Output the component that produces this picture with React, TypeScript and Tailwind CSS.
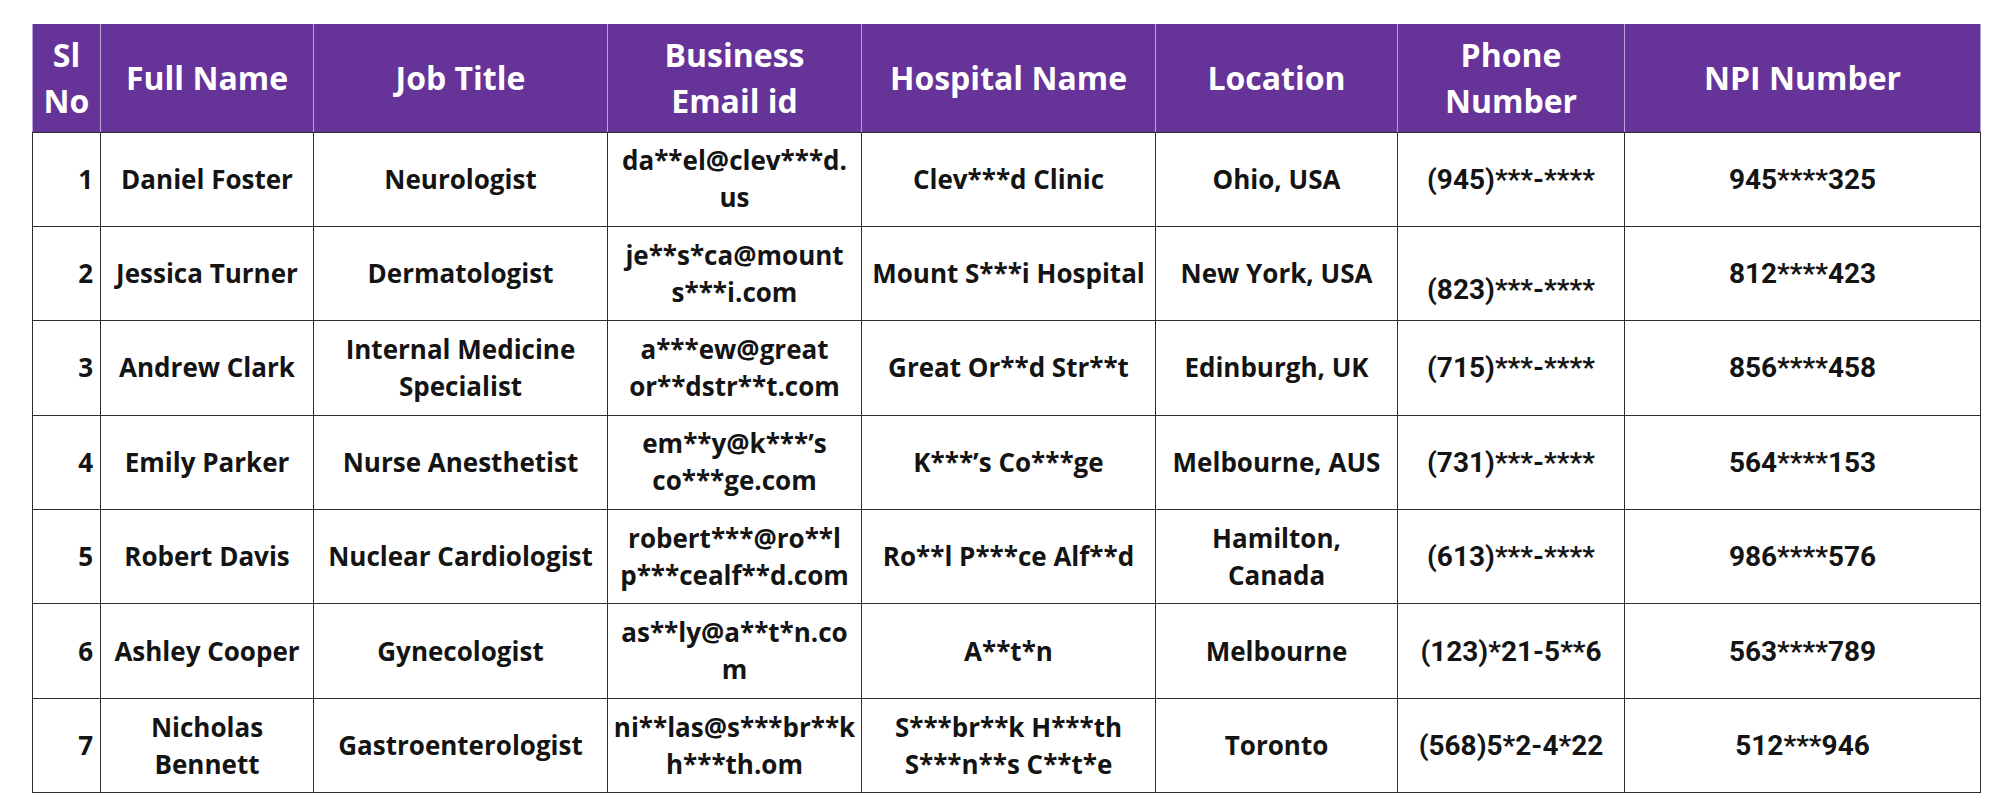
const HEAD = [
  ['Sl', 'No'],
  ['Full Name'],
  ['Job Title'],
  ['Business', 'Email id'],
  ['Hospital Name'],
  ['Location'],
  ['Phone', 'Number'],
  ['NPI Number'],
]

type Row = {
  no: number
  name: string[]
  job: string[]
  email: string[]
  hospital: string[]
  location: string[]
  phone: string
  npi: string
  phoneLow?: boolean
}

const ROWS: Row[] = [
  { no: 1, name: ['Daniel Foster'], job: ['Neurologist'], email: ['da**el@clev***d.', 'us'], hospital: ['Clev***d Clinic'], location: ['Ohio, USA'], phone: '(945)***-****', npi: '945****325' },
  { no: 2, name: ['Jessica Turner'], job: ['Dermatologist'], email: ['je**s*ca@mount', 's***i.com'], hospital: ['Mount S***i Hospital'], location: ['New York, USA'], phone: '(823)***-****', npi: '812****423', phoneLow: true },
  { no: 3, name: ['Andrew Clark'], job: ['Internal Medicine', 'Specialist'], email: ['a***ew@great', 'or**dstr**t.com'], hospital: ['Great Or**d Str**t'], location: ['Edinburgh, UK'], phone: '(715)***-****', npi: '856****458' },
  { no: 4, name: ['Emily Parker'], job: ['Nurse Anesthetist'], email: ['em**y@k***\u2019s', 'co***ge.com'], hospital: ['K***\u2019s Co***ge'], location: ['Melbourne, AUS'], phone: '(731)***-****', npi: '564****153' },
  { no: 5, name: ['Robert Davis'], job: ['Nuclear Cardiologist'], email: ['robert***@ro**l', 'p***cealf**d.com'], hospital: ['Ro**l P***ce Alf**d'], location: ['Hamilton,', 'Canada'], phone: '(613)***-****', npi: '986****576' },
  { no: 6, name: ['Ashley Cooper'], job: ['Gynecologist'], email: ['as**ly@a**t*n.co', 'm'], hospital: ['A**t*n'], location: ['Melbourne'], phone: '(123)*21-5**6', npi: '563****789' },
  { no: 7, name: ['Nicholas', 'Bennett'], job: ['Gastroenterologist'], email: ['ni**las@s***br**k', 'h***th.om'], hospital: ['S***br**k H***th', 'S***n**s C**t*e'], location: ['Toronto'], phone: '(568)5*2-4*22', npi: '512***946' },
]

function Lines({ lines }: { lines: string[] }) {
  return (
    <>
      {lines.map((l, i) => (
        <div key={i} className="whitespace-nowrap">{l}</div>
      ))}
    </>
  )
}

const td = 'border-[1.5px] border-[#2e2e2e] text-center align-middle'
const num = "font-['Roboto','Liberation_Sans',sans-serif] text-[28px]"

export default function App() {
  return (
    <div className="w-[2000px] h-[800px] bg-white pt-[24px] pl-[32px] font-['Open_Sans','Noto_Sans',sans-serif]">
      <table className="table-fixed border-collapse text-[#141414] font-bold">
        <colgroup>
          <col className="w-[68px]" />
          <col className="w-[213px]" />
          <col className="w-[294px]" />
          <col className="w-[254px]" />
          <col className="w-[294px]" />
          <col className="w-[242px]" />
          <col className="w-[227px]" />
          <col className="w-[356px]" />
        </colgroup>
        <thead>
          <tr className="h-[108px] bg-[#663399]">
            {HEAD.map((h, i) => (
              <th key={i} className="border-x border-x-[#b9a2d6] border-b-[1.5px] border-b-[#2e2e2e] text-white text-[32px] leading-[46px] font-bold text-center align-middle">
                <Lines lines={h} />
              </th>
            ))}
          </tr>
        </thead>
        <tbody className="text-[26px] leading-[37px]">
          {ROWS.map(r => (
            <tr key={r.no} className="h-[94.4px]">
              <td className={`${td} !text-right pr-[7px]`}>{r.no}</td>
              <td className={td}><Lines lines={r.name} /></td>
              <td className={td}><Lines lines={r.job} /></td>
              <td className={td}><Lines lines={r.email} /></td>
              <td className={td}><Lines lines={r.hospital} /></td>
              <td className={td}><Lines lines={r.location} /></td>
              <td className={`${td} ${num} ${r.phoneLow ? 'pt-[32px]' : ''}`}>{r.phone}</td>
              <td className={`${td} ${num}`}>{r.npi}</td>
            </tr>
          ))}
        </tbody>
      </table>
    </div>
  )
}
